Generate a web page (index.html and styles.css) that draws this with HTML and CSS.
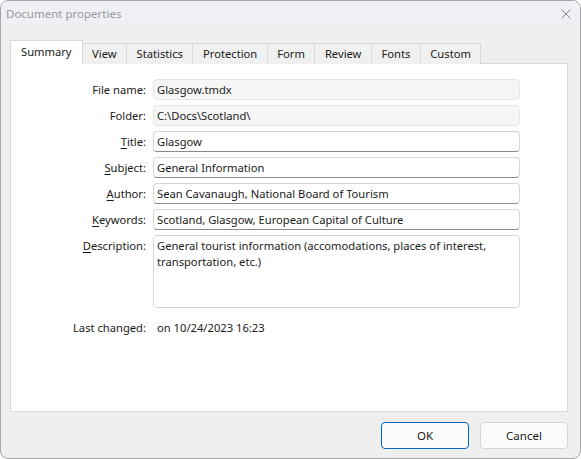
FILE: index.html
```html
<!DOCTYPE html>
<html>
<head>
<meta charset="utf-8">
<link rel="stylesheet" href="styles.css">
</head>
<body>
<div class="window">
  <div class="titlebar">
    <span class="title">Document properties</span>
    <svg class="close" width="10" height="10" viewBox="0 0 10 10"><path d="M0.5 0.5L9.5 9.5M9.5 0.5L0.5 9.5" stroke="#8a8a8a" stroke-width="1" fill="none"/></svg>
  </div>
  <div class="content">
    <div class="tabs">
      <div class="tab active">Summary</div>
      <div class="tab">View</div>
      <div class="tab">Statistics</div>
      <div class="tab">Protection</div>
      <div class="tab">Form</div>
      <div class="tab">Review</div>
      <div class="tab">Fonts</div>
      <div class="tab">Custom</div>
    </div>
    <div class="panel">
      <div class="form">
        <label class="lbl">File name:</label>
        <div class="field readonly">Glasgow.tmdx</div>
        <label class="lbl">Folder:</label>
        <div class="field readonly">C:\Docs\Scotland\</div>
        <label class="lbl"><u>T</u>itle:</label>
        <div class="field">Glasgow</div>
        <label class="lbl"><u>S</u>ubject:</label>
        <div class="field">General Information</div>
        <label class="lbl"><u>A</u>uthor:</label>
        <div class="field">Sean Cavanaugh, National Board of Tourism</div>
        <label class="lbl"><u>K</u>eywords:</label>
        <div class="field">Scotland, Glasgow, European Capital of Culture</div>
        <label class="lbl desc-lbl"><u>D</u>escription:</label>
        <div class="field area">General tourist information (accomodations, places of interest, transportation, etc.)</div>
        <label class="lbl changed-lbl">Last changed:</label>
        <div class="changed">on 10/24/2023 16:23</div>
      </div>
    </div>
    <div class="buttons">
      <button class="btn default">OK</button>
      <button class="btn">Cancel</button>
    </div>
  </div>
</div>
</body>
</html>
```

FILE: styles.css
```css
html, body {
  margin: 0;
  padding: 0;
  background: #ffffff;
}
body {
  font-family: "Noto Sans", "Open Sans", sans-serif;
  font-size: 11.2px;
  color: #1a1a1a;
}
.window {
  width: 581px;
  height: 459px;
  box-sizing: border-box;
  border: 1px solid #a6a6a6;
  border-radius: 8px;
  overflow: hidden;
  background: #efefef;
  display: flex;
  flex-direction: column;
}
.titlebar {
  height: 25px;
  flex: none;
  background: #eef0f5;
  display: flex;
  align-items: center;
  justify-content: space-between;
  padding: 0 9px 0 5px;
}
.title {
  color: #9a9a9a;
  font-size: 11.5px;
}
.close {
  display: block;
}
.content {
  flex: 1;
  display: flex;
  flex-direction: column;
  padding: 14px 12px 0 9px;
}
.tabs {
  display: flex;
  align-items: flex-end;
  height: 24px;
  margin-bottom: -1px;
}
.tab {
  position: relative;
  box-sizing: border-box;
  height: 21px;
  padding: 0 9.5px 2px 9.5px;
  border: 1px solid #d9d9d9;
  border-left: none;
  border-bottom: none;
  background: #f0f0f0;
  display: flex;
  align-items: center;
  color: #1a1a1a;
}
.tab.active {
  height: 24px;
  background: #ffffff;
  border-left: 1px solid #d9d9d9;
  padding: 0 10px 3px 10px;
  z-index: 1;
}
.panel {
  height: 349px;
  box-sizing: border-box;
  border: 1px solid #d9d9d9;
  background: #ffffff;
  padding: 15px 0 0 0;
}
.form {
  display: grid;
  grid-template-columns: 135px 367px;
  column-gap: 7px;
  row-gap: 5px;
  grid-auto-rows: 21px;
}
.lbl {
  text-align: right;
  display: flex;
  align-items: center;
  justify-content: flex-end;
  white-space: nowrap;
}
.lbl u {
  text-decoration-thickness: 1px;
  text-underline-offset: 2px;
}
.field {
  box-sizing: border-box;
  border: 1px solid #d6d6d6;
  border-bottom-color: #8a8a8a;
  border-radius: 4px;
  background: #ffffff;
  padding: 0 3px;
  display: flex;
  align-items: center;
  white-space: nowrap;
  overflow: hidden;
}
.field.readonly {
  background: #f6f6f6;
  border-color: #e6e6e6;
}
.field.area {
  height: 73px;
  align-items: flex-start;
  white-space: normal;
  padding: 2px 3px;
  line-height: 16px;
  border-bottom-color: #d6d6d6;
}
.desc-lbl {
  align-items: flex-start;
  padding-top: 3px;
  height: 16px;
}
.changed-lbl,
.changed {
  margin-top: 66px;
}
.changed {
  display: flex;
  align-items: center;
  padding-left: 4px;
}
.buttons {
  display: flex;
  justify-content: flex-end;
  gap: 11px;
  padding-top: 10px;
}
.btn {
  width: 88px;
  height: 27px;
  box-sizing: border-box;
  font-family: inherit;
  font-size: 11.5px;
  color: #1a1a1a;
  background: #fbfbfb;
  border: 1px solid #d6d6d6;
  border-radius: 4px;
  padding: 0;
}
.btn.default {
  border: 1px solid #0067c0;
}
```
